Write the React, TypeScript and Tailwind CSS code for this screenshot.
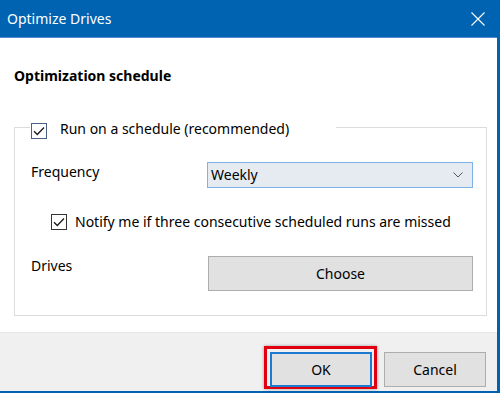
import React from "react";

function Check({ className = "" }: { className?: string }) {
  return (
    <span
      className={`flex h-[16px] w-[16px] shrink-0 items-center justify-center border bg-white ${className}`}
    >
      <svg width="12" height="10" viewBox="0 0 12 10" fill="none">
        <path d="M1 5.2 L4.3 8.5 L11 1.5" stroke="#1a1a1a" strokeWidth="1.3" />
      </svg>
    </span>
  );
}

export default function App() {
  return (
    <div className="flex h-[393px] w-[500px] flex-col border-b-2 border-r-[3px] border-[#0063b1] bg-white font-['Segoe_UI','Noto_Sans',sans-serif] text-[14px] text-black">
      <div className="flex h-[38px] shrink-0 items-center justify-between border-b border-[#4a8bc8] bg-[#0063b1] pl-[7px] pr-[12px] text-white">
        <span className="leading-[20px]">Optimize Drives</span>
        <svg width="14" height="14" viewBox="0 0 14 14" fill="none">
          <path d="M0.5 0.5 L13.5 13.5 M13.5 0.5 L0.5 13.5" stroke="white" strokeWidth="1.1" />
        </svg>
      </div>

      <div className="flex-1 pl-[14px] pr-[10px]">
        <h2 className="mt-[28px] text-[14px] font-bold leading-[20px]">Optimization schedule</h2>
        <fieldset className="mt-[29px] border border-[#dcdcdc]">
          <legend className="ml-[15px] flex h-[24px] w-[306px] items-end gap-[13px] pl-[1px]">
            <Check className="border-[#4b6284]" />
            <span className="leading-[20px]">Run on a schedule (recommended)</span>
          </legend>

          <div className="pb-[24px] pl-[16px] pr-[13px]">
            <div className="mt-[23px] grid grid-cols-[176px_1fr] items-start">
              <span className="leading-[20px]">Frequency</span>
              <div className="flex h-[26px] items-center justify-between border border-[#7cb2e6] bg-[#e5ebf1] pl-[3px] pr-[9px]">
                <span className="leading-[20px]">Weekly</span>
                <svg width="10" height="6" viewBox="0 0 10 6" fill="none">
                  <path d="M0.5 0.5 L5 5 L9.5 0.5" stroke="#555" strokeWidth="1" />
                </svg>
              </div>
            </div>

            <div className="mt-[26px] flex items-center gap-[8px] pl-[20px]">
              <Check className="border-[#333]" />
              <span className="leading-[16px]">Notify me if three consecutive scheduled runs are missed</span>
            </div>

            <div className="mt-[26px] grid grid-cols-[177px_1fr] items-start">
              <span className="leading-[20px]">Drives</span>
              <button className="h-[35px] w-[265px] border border-[#adadad] bg-[#e1e1e1] text-center leading-[20px]">
                Choose
              </button>
            </div>
          </div>
        </fieldset>
      </div>

      <div className="flex h-[59px] shrink-0 items-start justify-end gap-[12px] border-t border-[#e6e6e6] bg-[#f0f0f0] pr-[11px] pt-[19px]">
        <div className="relative">
          <span className="absolute -bottom-[2px] -left-[6px] -right-[5px] -top-[6px] border-[3px] border-[#e0000f] shadow-[0_0_3px_rgba(0,0,0,0.35)]" />
          <button className="relative h-[35px] w-[102px] border-2 border-[#1a7bd0] bg-[#e1e1e1] leading-[20px]">
            OK
          </button>
        </div>
        <button className="h-[35px] w-[102px] border border-[#adadad] bg-[#e1e1e1] leading-[20px]">
          Cancel
        </button>
      </div>
    </div>
  );
}
